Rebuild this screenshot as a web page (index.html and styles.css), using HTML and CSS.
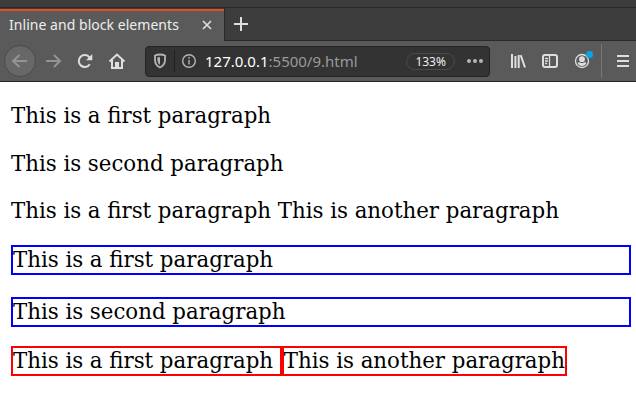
FILE: index.html
```html
<!DOCTYPE html>
<html lang="en">
<head>
<meta charset="utf-8">
<title>Inline and block elements</title>
<link rel="stylesheet" href="styles.css">
</head>
<body>
<header class="browser">
  <div class="tabs">
    <div class="tab"><span class="tab-title">Inline and block elements</span>
      <svg class="close" width="10" height="10" viewBox="0 0 10 10"><path d="M1 1l8 8M9 1L1 9"/></svg>
    </div>
    <div class="new-tab"><svg width="14" height="14" viewBox="0 0 14 14"><path d="M7 0v14M0 7h14"/></svg></div>
  </div>
  <nav class="toolbar">
    <span class="back"><svg width="18" height="16" viewBox="0 0 18 16"><path d="M16 8H2M8.500 2L2 8l6.500 6"/></svg></span>
    <svg class="forward" width="18" height="16" viewBox="0 0 18 16"><path d="M1 8h14M9 2l6 6-6 6"/></svg>
    <svg class="reload" width="16" height="16" viewBox="0 0 16 16"><path d="M12.800 11.300A6 6 0 1 1 12.500 4.300"/><path class="solid" d="M15.300 1v6.300H9z"/></svg>
    <svg class="home" width="18" height="16" viewBox="0 0 18 16"><path d="M1.500 8.500L9 1.500l7.500 7M4 7v8h10V7"/><path class="solid" d="M7 15V9h4v6z"/></svg>
    <div class="address">
      <svg class="shield" width="14" height="16" viewBox="0 0 14 16"><path d="M2 2.500Q7 .500 12 2.500V7q0 5-5 7.500Q2 12 2 7z"/><path class="solid" d="M7 4v8Q4.300 10 4.300 7V4.500z"/></svg>
      <span class="divider"></span>
      <svg class="info" width="14" height="14" viewBox="0 0 14 14"><circle cx="7" cy="7" r="6.300"/><path d="M7 6v4.500M7 3v1.700"/></svg>
      <span class="url"><b>127.0.0.1</b>:5500/9.html</span>
      <span class="zoom">133%</span>
      <svg class="dots" width="16" height="4" viewBox="0 0 16 4"><circle cx="2" cy="2" r="2"/><circle cx="8" cy="2" r="2"/><circle cx="14" cy="2" r="2"/></svg>
    </div>
    <svg class="library" width="16" height="14" viewBox="0 0 16 14"><path d="M2 0v14M5.400 2v12M8.700 1v13M10.700 1.200L15 13.500"/></svg>
    <svg class="sidebar" width="16" height="14" viewBox="0 0 16 14"><rect x="1" y="1" width="14" height="12" rx="2"/><path class="thin" d="M7.500 1v12M3 4.500h3M3 7h3M3 9.500h2"/></svg>
    <span class="account"><svg width="16" height="16" viewBox="0 0 16 16"><circle cx="8" cy="8" r="6.500"/><circle class="solid" cx="8" cy="6.200" r="2.900"/><path class="solid" d="M3.500 9.800Q5 9 6 9.500Q8 10.700 10 9.500Q11 9 12.500 9.800Q11 13 8 13T3.500 9.800z"/></svg><i class="badge"></i></span>
    <span class="separator"></span>
    <svg class="menu" width="12" height="12" viewBox="0 0 12 12"><path d="M0 1h12M0 6h12M0 11h12"/></svg>
  </nav>
</header>
<main>
  <p>This is a first paragraph</p>
  <p>This is second paragraph</p>
  <div class="line"><span>This is a first paragraph </span><span>This is another paragraph</span></div>
  <p class="block">This is a first paragraph</p>
  <p class="block">This is second paragraph</p>
  <div class="line boxed"><span class="inline">This is a first paragraph </span><span class="inline">This is another paragraph</span></div>
</main>
</body>
</html>
```
FILE: styles.css
```css
* { box-sizing: border-box; }
body { margin: 0; width: 636px; height: 410px; overflow: hidden; background: #fff; }
svg { fill: none; stroke: #dedede; stroke-width: 2; flex: none; }
.solid { fill: #dedede; stroke: none; }
.browser { height: 82px; padding-top: 7px; background: #3d3d3d; border-bottom: 1px solid #252525; font-family: "Noto Sans", sans-serif; color: #eee; }
.tabs { display: flex; height: 34px; border-top: 1px solid #292929; background: #3d3d3d; }
.tab { display: flex; align-items: center; justify-content: space-between; width: 224px; height: 32px; padding: 0 12px 3px 9px; background: #5a5a5a; border-top: 2px solid #e2501b; margin-top: 1px; box-shadow: 0 1px #5a5a5a; }
.tab-title { font-size: 14px; line-height: 20px; letter-spacing: 0.04px; white-space: nowrap; }
.close { stroke-width: 1.7; }
.new-tab { flex: 1; padding: 9px 0 0 9px; border-left: 1px solid #292929; border-bottom: 1px solid #292929; }
.new-tab svg { display: block; }
.toolbar { display: flex; align-items: center; height: 40px; padding-left: 4px; background: #5a5a5a; }
.back { display: flex; align-items: center; justify-content: center; width: 32px; height: 32px; border: 1px solid #4b4b4b; border-radius: 50%; background: #686868; }
.back svg, .forward { stroke: #949494; }
.forward { margin-left: 9px; }
.reload { margin-left: 14px; }
.home { margin-left: 15px; }
.address { display: flex; align-items: center; width: 345px; height: 31px; margin-left: 19px; padding: 0 6px 0 7px; border: 1px solid #242424; border-radius: 4px; background: #333; }
.shield { stroke: #b5b5b5; stroke-width: 1.8; }
.shield .solid { fill: #b5b5b5; }
.divider { width: 1px; height: 22px; margin: 0 7px; background: #202020; }
.info { stroke: #b5b5b5; stroke-width: 1.4; }
.url { margin-left: 9px; width: 203px; font-size: 15px; line-height: 20px; color: #9a9a9a; }
.url b { font-weight: 400; color: #fff; }
.zoom { width: 49px; height: 17px; border: 1px solid #4b4b4b; border-radius: 9px; font-size: 12px; line-height: 15px; text-align: center; }
.dots { margin-left: 12px; fill: #b5b5b5; stroke: none; }
.library { margin-left: 20px; }
.sidebar { margin-left: 16px; }
.thin { stroke-width: 1.3; }
.account { position: relative; width: 16px; height: 16px; margin-left: 16px; }
.account svg { display: block; stroke-width: 1.3; }
.badge { position: absolute; top: -2px; left: 12px; width: 7px; height: 7px; border-radius: 50%; background: #00a7ec; }
.separator { width: 1px; height: 34px; margin: 0 15px 0 11px; background: #777; }
main { padding: 21px 5px 0 11px; font-family: "DejaVu Serif", serif; font-size: 21.333px; line-height: 26px; word-spacing: -0.1px; color: #000; }
p { margin: 0 0 22px; }
.line { margin: -1px 0 21px; white-space: pre; }
.block { border: 2px solid #00f; }
.boxed { display: flex; margin-top: -3px; }
.inline { border: 2px solid #f00; }
```
